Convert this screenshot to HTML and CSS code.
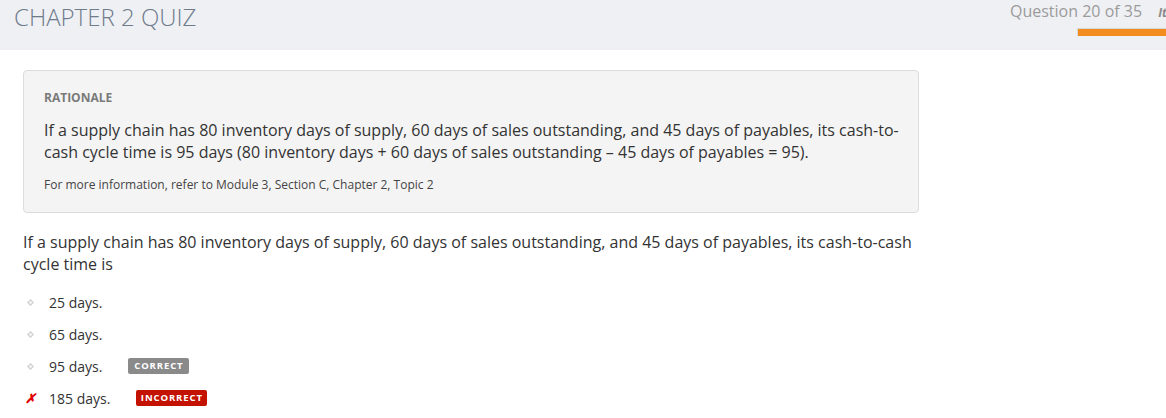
FILE: index.html
```html
<!DOCTYPE html>
<html>
<head>
<meta charset="utf-8">
<link rel="stylesheet" href="styles.css">
</head>
<body>
<header class="topbar">
  <h1 class="quiz-title">CHAPTER 2 QUIZ</h1>
  <div class="progress">
    <div class="progress-text"><span class="q-count">Question 20 of 35</span><span class="q-item">It</span></div>
    <div class="progress-bar"></div>
  </div>
</header>
<main class="content">
  <section class="rationale">
    <h2 class="rationale-label">RATIONALE</h2>
    <p class="rationale-text">If a supply chain has 80 inventory days of supply, 60 days of sales outstanding, and 45 days of payables, its cash-to-cash cycle time is 95 days (80 inventory days + 60 days of sales outstanding – 45 days of payables = 95).</p>
    <p class="rationale-ref">For more information, refer to Module 3, Section C, Chapter 2, Topic 2</p>
  </section>
  <p class="question">If a supply chain has 80 inventory days of supply, 60 days of sales outstanding, and 45 days of payables, its cash-to-cash cycle time is</p>
  <ul class="options">
    <li class="option"><span class="marker"><span class="dot"></span></span><span class="opt-text">25 days.</span></li>
    <li class="option"><span class="marker"><span class="dot"></span></span><span class="opt-text">65 days.</span></li>
    <li class="option"><span class="marker"><span class="dot"></span></span><span class="opt-text">95 days.</span><span class="badge badge-correct">CORRECT</span></li>
    <li class="option"><span class="marker"><span class="cross">✗</span></span><span class="opt-text">185 days.</span><span class="badge badge-incorrect">INCORRECT</span></li>
  </ul>
</main>
</body>
</html>
```

FILE: styles.css
```css
html, body {
  margin: 0;
  padding: 0;
  background: #ffffff;
  font-family: "Open Sans", "Liberation Sans", sans-serif;
  color: #333333;
  overflow: hidden;
}

.topbar {
  height: 50px;
  background: #eff0f4;
  display: flex;
  justify-content: space-between;
  align-items: flex-start;
  overflow: hidden;
}

.quiz-title {
  margin: 0;
  padding: 1px 0 0 14px;
  font-size: 24px;
  font-weight: 300;
  line-height: 32px;
  color: #6e7b8b;
}

.progress {
  display: flex;
  flex-direction: column;
  align-items: flex-start;
  width: 156px;
}

.progress-text {
  display: flex;
  align-items: baseline;
  white-space: nowrap;
}

.q-count {
  font-size: 16px;
  line-height: 22px;
  color: #9b9b9b;
}

.q-item {
  margin-left: 16px;
  font-size: 12px;
  font-style: italic;
  font-weight: 700;
  color: #8a8a8a;
}

.progress-bar {
  margin-top: 6px;
  align-self: stretch;
  margin-left: 67px;
  height: 7px;
  background: #f28c1e;
  border-top: 1px solid #d8d8d8;
  border-left: 1px solid #d8d8d8;
}

.content {
  padding: 20px 0 0 23px;
  width: 896px;
}

.rationale {
  background: #f4f4f4;
  border: 1px solid #dcdcdc;
  border-radius: 4px;
  padding: 18px 8px 19px 20px;
}

.rationale-label {
  margin: 0;
  font-size: 12px;
  font-weight: 700;
  line-height: 17px;
  color: #7a7a7a;
}

.rationale-text {
  margin: 13px 0 0 0;
  font-size: 16px;
  line-height: 22px;
  color: #333333;
}

.rationale-ref {
  margin: 13px 0 0 0;
  font-size: 12px;
  line-height: 17px;
  color: #444444;
}

.question {
  margin: 18px 0 0 0;
  font-size: 16px;
  line-height: 22px;
  color: #333333;
}

.options {
  list-style: none;
  margin: 16px 0 0 0;
  padding: 0;
  display: flex;
  flex-direction: column;
  gap: 10px;
}

.option {
  display: flex;
  align-items: center;
  height: 22px;
  font-size: 14px;
}

.marker {
  width: 26px;
  display: flex;
  align-items: center;
  padding-left: 2px;
  box-sizing: border-box;
}

.dot {
  width: 3px;
  height: 3px;
  border: 1px solid #cfcfcf;
  background: #f0f0f0;
  transform: rotate(45deg);
  margin-left: 3px;
}

.cross {
  color: #e00000;
  font-size: 13px;
  font-style: italic;
  font-weight: 700;
  line-height: 1;
}

.opt-text {
  color: #333333;
}

.badge {
  display: inline-block;
  font-size: 9.5px;
  font-weight: 700;
  letter-spacing: 0.9px;
  color: #ffffff;
  line-height: 16px;
  height: 16px;
  border-radius: 2px;
  text-align: center;
}

.badge-correct {
  background: #8a8a8a;
  width: 61px;
  margin-left: 26px;
}

.badge-incorrect {
  background: #c41200;
  width: 71px;
  margin-left: 26px;
}
```
